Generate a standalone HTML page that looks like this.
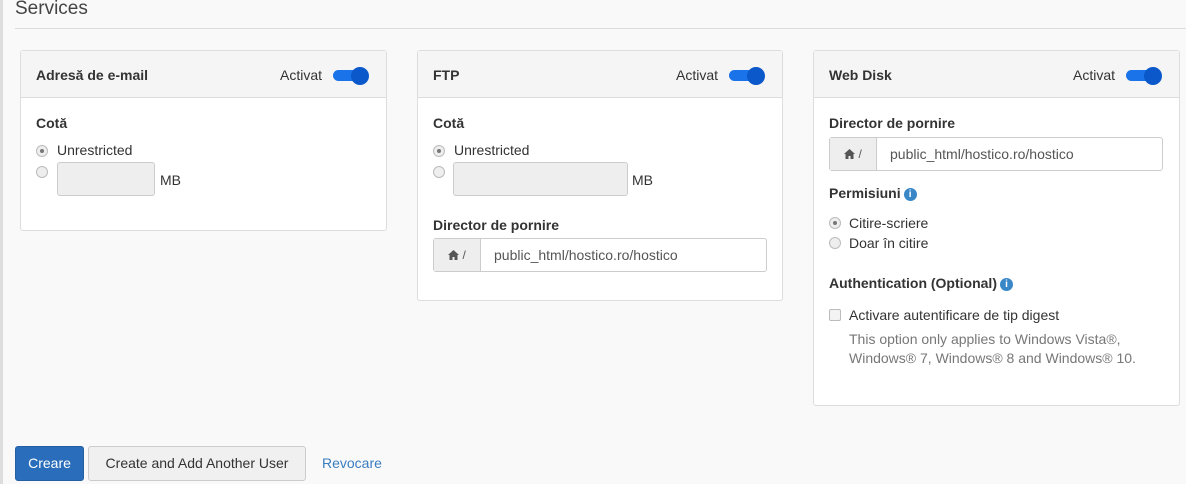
<!DOCTYPE html>
<html><head><meta charset="utf-8"><style>
*{box-sizing:border-box;margin:0;padding:0}
body{width:1186px;height:484px;background:#f9f9f9;font-family:"Liberation Sans",sans-serif;font-size:14px;color:#333;position:relative;overflow:hidden}
.edge{position:absolute;left:0;top:0;width:3px;height:484px;background:#ddd}
h2{position:absolute;left:15px;top:-2px;font-weight:normal;font-size:19px;color:#444}
.hr{position:absolute;left:15px;right:0;top:28px;height:1px;background:#ddd}
.p{position:absolute;background:#fff;border:1px solid #ddd;border-radius:3px}
.hd{height:47px;background:#f5f5f5;border-bottom:1px solid #ddd;position:relative}
.hd b{position:absolute;left:15px;top:16px;font-size:14px}
.act{position:absolute;right:64px;top:16px;color:#333}
.tg{position:absolute;right:17px;top:16px;width:36px;height:16px}
.tg i{position:absolute;left:0;top:3px;width:30px;height:11px;border-radius:6px;background:#1a73e8}
.tg s{position:absolute;right:0;top:0;width:18px;height:18px;border-radius:50%;background:#0a58ca}
.a{position:absolute}
.lbl{font-weight:bold}
.rad{position:absolute;width:12px;height:12px;border-radius:50%;border:1px solid #bbb;background:#eee}
.rad.on::after{content:"";position:absolute;left:3px;top:3px;width:4px;height:4px;border-radius:50%;background:#777}
.inp{position:absolute;width:98px;height:34px;background:#eee;border:1px solid #ccc;border-radius:3px}
.grp{position:absolute;height:34px;border:1px solid #ccc;border-radius:3px;background:#fff}
.grp .ad{position:absolute;left:0;top:0;width:47px;height:32px;background:#eee;border-right:1px solid #ccc;color:#555;font-size:12px;text-align:center;line-height:32px}
.grp .ad svg{vertical-align:-1px}
.grp .t{position:absolute;left:60px;top:8px;color:#555}
.info{display:inline-block;width:13px;height:13px;border-radius:50%;background:#3a87c8;color:#fff;font-size:10px;font-weight:bold;text-align:center;line-height:13px;vertical-align:1px;margin-left:3px}
.btn{position:absolute;top:446px;height:35px;border-radius:3px;line-height:33px;font-size:14px;text-align:center}
</style></head><body>
<div class="edge"></div>
<h2>Services</h2><div class="hr"></div>

<div class="p" style="left:20px;top:50px;width:367px;height:181px">
 <div class="hd"><b>Adresă de e-mail</b><span class="act">Activat</span><span class="tg"><i></i><s></s></span></div>
 <div class="a lbl" style="left:15px;top:64px">Cotă</div>
 <div class="rad on" style="left:15px;top:94px"></div><div class="a" style="left:36px;top:91px">Unrestricted</div>
 <div class="rad" style="left:15px;top:115px"></div><div class="inp" style="left:36px;top:111px"></div><div class="a" style="left:139px;top:121px">MB</div>
</div>

<div class="p" style="left:417px;top:50px;width:366px;height:251px">
 <div class="hd"><b>FTP</b><span class="act">Activat</span><span class="tg"><i></i><s></s></span></div>
 <div class="a lbl" style="left:15px;top:64px">Cotă</div>
 <div class="rad on" style="left:15px;top:94px"></div><div class="a" style="left:36px;top:91px">Unrestricted</div>
 <div class="rad" style="left:15px;top:115px"></div><div class="inp" style="left:35px;top:111px;width:175px"></div><div class="a" style="left:214px;top:121px">MB</div>
 <div class="a lbl" style="left:15px;top:166px">Director de pornire</div>
 <div class="grp" style="left:15px;top:187px;width:334px"><div class="ad"><svg width="11" height="10" viewBox="0 0 11 10"><path d="M5.5 0L0 5h1.5v5h3V7h2v3h3V5H11z" fill="#555"/></svg> /</div><span class="t">public_html/hostico.ro/hostico</span></div>
</div>

<div class="p" style="left:813px;top:50px;width:367px;height:356px">
 <div class="hd"><b>Web Disk</b><span class="act">Activat</span><span class="tg"><i></i><s></s></span></div>
 <div class="a lbl" style="left:15px;top:64px">Director de pornire</div>
 <div class="grp" style="left:15px;top:86px;width:334px"><div class="ad"><svg width="11" height="10" viewBox="0 0 11 10"><path d="M5.5 0L0 5h1.5v5h3V7h2v3h3V5H11z" fill="#555"/></svg> /</div><span class="t">public_html/hostico.ro/hostico</span></div>
 <div class="a lbl" style="left:15px;top:134px">Permisiuni<span class="info">i</span></div>
 <div class="rad on" style="left:15px;top:166px"></div><div class="a" style="left:35px;top:164px">Citire-scriere</div>
 <div class="rad" style="left:15px;top:186px"></div><div class="a" style="left:35px;top:184px">Doar în citire</div>
 <div class="a lbl" style="left:15px;top:224px">Authentication (Optional)<span class="info">i</span></div>
 <div class="a" style="left:15px;top:258px;width:12px;height:12px;border:1px solid #bbb;border-radius:2px;background:#f3f3f3"></div>
 <div class="a" style="left:35px;top:256px">Activare autentificare de tip digest</div>
 <div class="a" style="left:35px;top:279px;color:#777;line-height:19px">This option only applies to Windows Vista®,<br>Windows® 7, Windows® 8 and Windows® 10.</div>
</div>

<div class="btn" style="left:15px;width:69px;background:#2a6ebb;border:1px solid #245f9f;color:#fff">Creare</div>
<div class="btn" style="left:88px;width:218px;background:#f0f0f0;border:1px solid #ccc;color:#333">Create and Add Another User</div>
<div class="a" style="left:322px;top:455px;color:#3a7dc0">Revocare</div>
</body></html>
